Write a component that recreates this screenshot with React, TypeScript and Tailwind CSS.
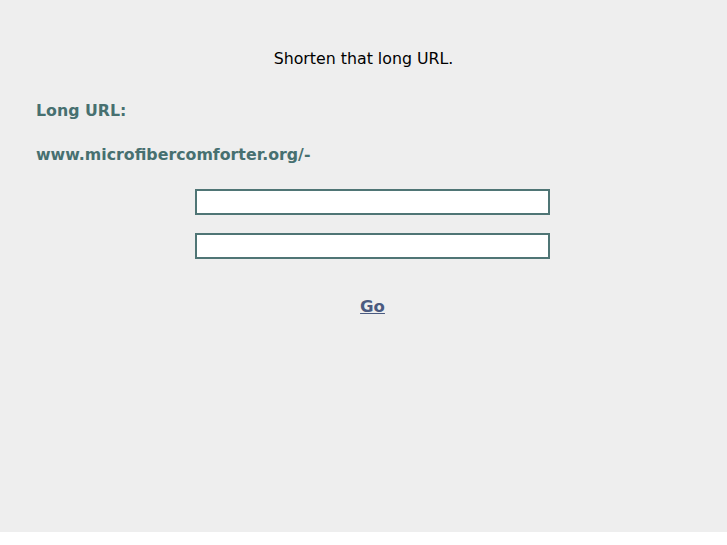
export default function App() {
  return (
    <div className="bg-white font-['DejaVu_Sans',sans-serif]">
      <div className="h-[532px] bg-[#eeeeee] pt-[49px]">
        <h1 className="text-center text-[15.8px] font-medium leading-[20px] text-black">Shorten that long URL.</h1>
        <div className="mt-[32px] px-[36px]">
          <p className="text-[15.8px] font-bold leading-[20px] text-[#477070]">Long URL:</p>
          <p className="mt-[24px] text-[15.8px] font-bold leading-[20px] text-[#477070]">www.microfibercomforter.org/-</p>
        </div>
        <div className="mt-[24px] flex flex-col items-center gap-[18px] pl-[18px]">
          <input type="text" className="h-[26px] w-[355px] border-2 border-[#4f7575] bg-white" />
          <input type="text" className="h-[26px] w-[355px] border-2 border-[#4f7575] bg-white" />
        </div>
        <div className="mt-[36px] pl-[18px] text-center">
          <a href="#" className="text-[16.5px] font-bold leading-[20px] text-[#4a5a80] underline">Go</a>
        </div>
      </div>
    </div>
  );
}
